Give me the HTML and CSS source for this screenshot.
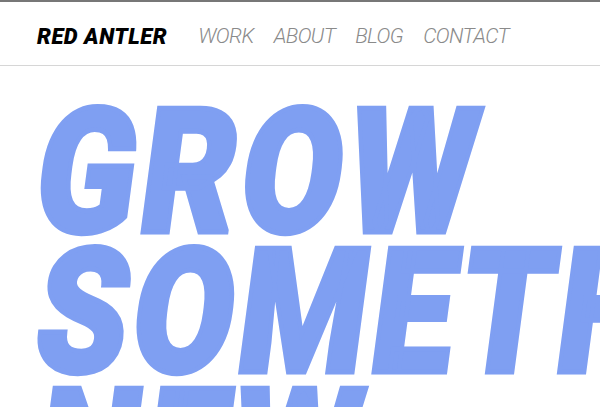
FILE: index.html
```html
<!DOCTYPE html>
<html lang="en">
<head>
<meta charset="utf-8">
<title>Red Antler</title>
<link rel="stylesheet" href="styles.css">
</head>
<body>
<header class="site-header">
  <a class="logo" href="#">RED ANTLER</a>
  <nav class="main-nav">
    <a href="#">WORK</a>
    <a href="#">ABOUT</a>
    <a href="#">BLOG</a>
    <a href="#">CONTACT</a>
  </nav>
</header>
<main class="hero">
  <h1 class="headline">
    <span class="line">GROW</span>
    <span class="line">SOMETHING</span>
    <span class="line">NEW</span>
  </h1>
</main>
</body>
</html>
```

FILE: styles.css
```css
html, body {
  margin: 0;
  padding: 0;
  background: #fff;
  overflow: hidden;
  height: 100%;
}

.site-header {
  display: flex;
  align-items: center;
  height: 58px;
  padding: 5px 0 0 37px;
  border-top: 2px solid #777;
  border-bottom: 1px solid #d6d6d6;
  box-sizing: content-box;
}

.logo {
  font-family: Roboto, "DejaVu Sans", sans-serif;
  font-weight: 900;
  font-style: italic;
  font-size: 22px;
  letter-spacing: 0.5px;
  color: #000;
  text-decoration: none;
}

.main-nav {
  display: flex;
  gap: 20px;
  margin-left: 31px;
}

.main-nav a {
  font-family: Roboto, "DejaVu Sans", sans-serif;
  font-weight: 300;
  font-style: italic;
  font-size: 21px;
  letter-spacing: -0.6px;
  color: #8a8a8a;
  text-decoration: none;
}

.hero {
  padding-left: 30px;
}

.headline {
  margin: 37px 0 0;
  font-family: Roboto, "DejaVu Sans", sans-serif;
  font-weight: 900;
  font-size: 174px;
  line-height: 140px;
  letter-spacing: 6px;
  color: #7f9ff2;
  -webkit-text-stroke: 5px #7f9ff2;
  white-space: nowrap;
}

.line {
  display: block;
  transform-origin: 0 130px;
  transform: scaleX(0.84) skewX(-9deg);
}
```
